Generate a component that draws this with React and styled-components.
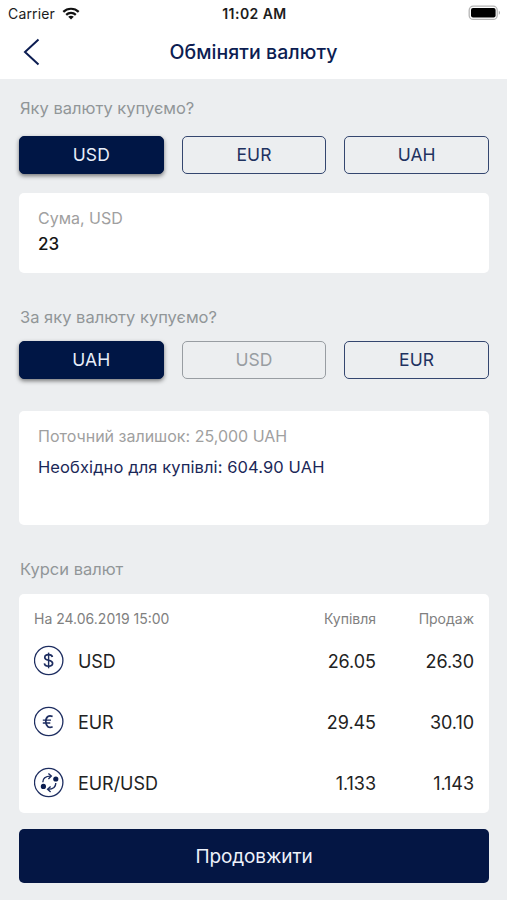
import React, { useState } from "react"
import styled, { createGlobalStyle } from "styled-components"

const GlobalStyle = createGlobalStyle`
  * {
    box-sizing: border-box;
  }
  body {
    margin: 0;
    background-color: #eceef0;
    font-family: Inter, "Liberation Sans", sans-serif;
  }
  button {
    font-family: inherit;
    cursor: pointer;
  }
`
const StyledScreen = styled.div`
  display: flex;
  flex-direction: column;
  width: 100%;
  height: 900px;
  background-color: #eceef0;
  overflow: hidden;
`
const StyledStatusBar = styled.div`
  display: grid;
  grid-template-columns: 1fr auto 1fr;
  align-items: center;
  height: 26px;
  padding: 0 6px 0 8px;
  background-color: white;
  color: #1c1c1c;
  font-size: 14px;
`
const StyledCarrier = styled.div`
  display: flex;
  align-items: center;
  gap: 7px;
  letter-spacing: 0.15px;
`
const StyledTime = styled.div`
  font-size: 14px;
  font-weight: 600;
  letter-spacing: 0.45px;
`
const StyledBattery = styled.svg`
  justify-self: end;
`
const StyledHeader = styled.header`
  display: grid;
  grid-template-columns: 60px 1fr 60px;
  align-items: center;
  height: 53px;
  padding-bottom: 2px;
  background-color: white;
`
const StyledBackButton = styled.button`
  display: flex;
  padding: 0 0 0 23px;
  border: none;
  background: none;
`
const StyledTitle = styled.h1`
  margin: 0;
  padding-top: 1px;
  text-align: center;
  color: #0c1d52;
  font-size: 19.5px;
  font-weight: 500;
  letter-spacing: 0.05px;
`
const StyledContent = styled.main`
  display: flex;
  flex-direction: column;
  padding: 0 18px 0 19px;
`
const StyledLabel = styled.h2`
  margin: ${props => props.$top}px 0 ${props => props.$bottom}px 1px;
  color: #919698;
  font-size: 16.5px;
  font-weight: 400;
  line-height: 20px;
`
const StyledCurrencies = styled.div`
  display: grid;
  grid-template-columns: repeat(3, 1fr);
  gap: 18px;
`
const currencyColor = props =>
  props.disabled ? "#989da2" : props.$active ? "#001645" : "#34466f"

const StyledCurrency = styled.button`
  height: 38px;
  padding: 0 0 2px;
  border: 1.5px solid ${currencyColor};
  border-radius: 5px;
  background-color: ${props => (props.$active ? "#001645" : "transparent")};
  box-shadow: ${props =>
    props.$active ? "0 2px 4px rgba(0, 0, 0, 0.5)" : "none"};
  color: ${props =>
    props.disabled ? "#989da2" : props.$active ? "#e8eefa" : "#1f3260"};
  font-size: 17.5px;
  letter-spacing: 0.1px;
`
const StyledCard = styled.section`
  height: ${props => props.$height}px;
  margin-top: ${props => props.$top || 0}px;
  padding: ${props => props.$padding};
  border-radius: 5px;
  background-color: white;
`
const StyledHint = styled.p`
  margin: 0;
  color: #a0a0a0;
  font-size: 16px;
  line-height: 20px;
`
const StyledAmount = styled.p`
  margin: 6px 0 0;
  color: #151515;
  font-size: 17px;
  font-weight: 500;
  line-height: 20px;
`
const StyledRequired = styled.p`
  margin: 11px 0 0;
  color: #1b2858;
  font-size: 16.5px;
  line-height: 20px;
  letter-spacing: 0.1px;
`
const StyledRateRow = styled.div`
  display: grid;
  grid-template-columns: 44px 1fr 100px 98px;
  align-items: center;
  height: 61px;
  color: #222;
  font-size: 18px;
  letter-spacing: -0.05px;
`
const StyledRateHeader = styled(StyledRateRow)`
  grid-template-columns: 1fr 100px 98px;
  height: 37px;
  padding-top: 11px;
  color: #808080;
  font-size: 14px;
  letter-spacing: 0;
`
const StyledRate = styled.span`
  text-align: right;
`
const StyledIcon = styled.svg`
  display: block;
  margin-bottom: 2px;
`
const StyledSubmit = styled.button`
  height: 54px;
  margin-top: 16px;
  border: none;
  border-radius: 5px;
  background-color: #041644;
  color: #eef2fb;
  font-size: 19px;
  letter-spacing: -0.1px;
`

const rates = [
  { name: "USD", buy: "26.05", sell: "26.30" },
  { name: "EUR", buy: "29.45", sell: "30.10" },
  { name: "EUR/USD", buy: "1.133", sell: "1.143" },
]

const WifiIcon = () => (
  <svg width="18" height="13" viewBox="0 0 18 13" fill="none">
    <g stroke="#111" strokeWidth="2.2">
      <path d="M1.3 4.9C5.5 0.7 12.5 0.7 16.7 4.9" />
      <path d="M4.2 7.9C6.9 5.3 11.1 5.3 13.8 7.9" />
    </g>
    <path d="M9 12.6L6.2 9.8C7.8 8.4 10.2 8.4 11.8 9.8Z" fill="#111" />
  </svg>
)

const BatteryIcon = () => (
  <StyledBattery width="33" height="16" viewBox="0 0 33 16">
    <rect x="1.2" y="1.2" width="28" height="13.2" rx="4" fill="none" stroke="#b5b5b5" strokeWidth="1.3" />
    <rect x="3" y="3" width="24.6" height="9.6" rx="2" fill="#000" />
    <path d="M30.8 5.8C32.4 6.6 32.4 9 30.8 9.8Z" fill="#aaa" />
  </StyledBattery>
)

const RateIcon = ({ name }) => (
  <StyledIcon width="31" height="31" viewBox="0 0 31 31" fill="none" stroke="#1d2d60">
    <circle cx="14.7" cy="15.5" r="14.2" strokeWidth="1.3" />
    {name === "USD" && (
      <g strokeWidth="1.7">
        <path d="M18.4 12C18.1 10.4 16.6 9.7 14.5 9.7C12.2 9.7 10.8 10.7 10.8 12.4C10.8 16.5 18.6 14 18.6 18.3C18.6 20.1 17 21.2 14.6 21.2C12.2 21.2 10.6 20.2 10.4 18.4" />
        <path d="M14.6 7.6V23.3" strokeWidth="1.4" />
      </g>
    )}
    {name === "EUR" && (
      <g strokeWidth="1.7">
        <path d="M18.6 10.6C15.1 8.8 11.8 10.5 11.8 15.6C11.8 20.7 15.1 22.5 18.6 20.7" />
        <path d="M8.8 14.2H17M8.8 17H16.3" strokeWidth="1.3" />
      </g>
    )}
    {name === "EUR/USD" && (
      <g strokeWidth="1.4">
        <path d="M8.8 15.3C8.8 11.5 11.6 9.1 16.7 9.1" />
        <path d="M14.4 6.4L17.3 9.1L14.4 11.9" />
        <path d="M21.8 16C21.8 19.8 19 22.2 14 22.2" />
        <path d="M16.6 19.4L13.6 22.2L16.6 25" />
        <circle cx="21.8" cy="12" r="2.6" fill="#0b1d50" stroke="none" />
        <circle cx="9.4" cy="19.4" r="2.6" fill="#0b1d50" stroke="none" />
      </g>
    )}
  </StyledIcon>
)

export default function App() {
  const [bought, setBought] = useState("USD")
  const [paid, setPaid] = useState("UAH")

  return (
    <>
      <GlobalStyle />
      <StyledScreen>
        <StyledStatusBar>
          <StyledCarrier>
            Carrier
            <WifiIcon />
          </StyledCarrier>
          <StyledTime>11:02 AM</StyledTime>
          <BatteryIcon />
        </StyledStatusBar>
        <StyledHeader>
          <StyledBackButton>
            <svg width="18" height="28" viewBox="0 0 18 28" fill="none">
              <path d="M15.5 1.5L2 14L15.5 26.5" stroke="#0c1d52" strokeWidth="2" />
            </svg>
          </StyledBackButton>
          <StyledTitle>Обміняти валюту</StyledTitle>
        </StyledHeader>
        <StyledContent>
          <StyledLabel $top={19} $bottom={18}>
            Яку валюту купуємо?
          </StyledLabel>
          <StyledCurrencies>
            {["USD", "EUR", "UAH"].map(currency => (
              <StyledCurrency
                key={currency}
                $active={currency === bought}
                onClick={() => setBought(currency)}
              >
                {currency}
              </StyledCurrency>
            ))}
          </StyledCurrencies>
          <StyledCard $top={19} $height={80} $padding="15px 19px">
            <StyledHint>Сума, {bought}</StyledHint>
            <StyledAmount>23</StyledAmount>
          </StyledCard>
          <StyledLabel $top={34} $bottom={14}>
            За яку валюту купуємо?
          </StyledLabel>
          <StyledCurrencies>
            {["UAH", "USD", "EUR"].map(currency => (
              <StyledCurrency
                key={currency}
                $active={currency === paid}
                disabled={currency === bought}
                onClick={() => setPaid(currency)}
              >
                {currency}
              </StyledCurrency>
            ))}
          </StyledCurrencies>
          <StyledCard $top={32} $height={114} $padding="15px 19px">
            <StyledHint>Поточний залишок: 25,000 UAH</StyledHint>
            <StyledRequired>Необхідно для купівлі: 604.90 UAH</StyledRequired>
          </StyledCard>
          <StyledLabel $top={34} $bottom={15}>
            Курси валют
          </StyledLabel>
          <StyledCard $height={219} $padding="0 15px">
            <StyledRateHeader>
              <span>На 24.06.2019 15:00</span>
              <StyledRate>Купівля</StyledRate>
              <StyledRate>Продаж</StyledRate>
            </StyledRateHeader>
            {rates.map(rate => (
              <StyledRateRow key={rate.name}>
                <RateIcon name={rate.name} />
                <span>{rate.name}</span>
                <StyledRate>{rate.buy}</StyledRate>
                <StyledRate>{rate.sell}</StyledRate>
              </StyledRateRow>
            ))}
          </StyledCard>
          <StyledSubmit>Продовжити</StyledSubmit>
        </StyledContent>
      </StyledScreen>
    </>
  )
}
